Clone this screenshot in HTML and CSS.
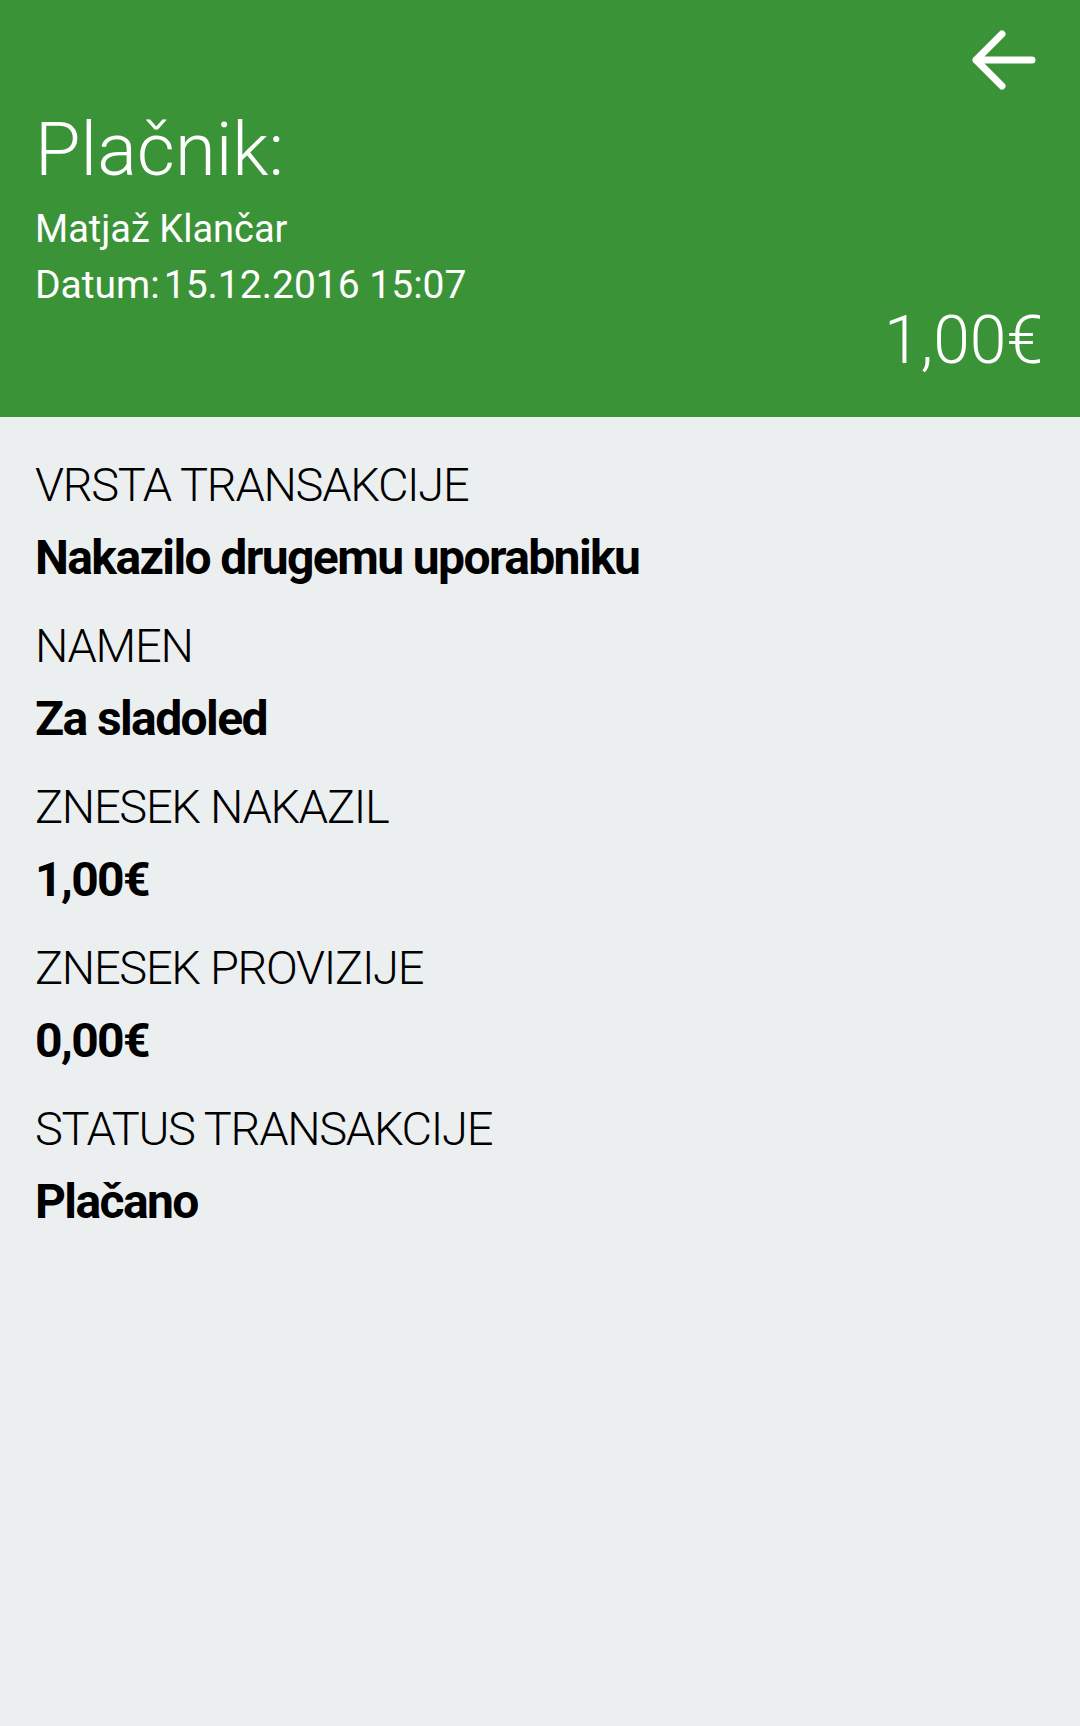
FILE: index.html
```html
<!DOCTYPE html>
<html lang="sl">
<head>
  <meta charset="UTF-8">
  <title>Podrobnosti transakcije</title>
  <link rel="stylesheet" href="styles.css">
</head>
<body>
  <header class="payer-header">
    <div class="top-row">
      <a href="#" class="back-btn" aria-label="Nazaj">
        <svg width="64" height="62" viewBox="0 0 64 62">
          <path d="M60 31H4M30 5L4 31L30 57" fill="none" stroke="#fff" stroke-width="7" stroke-linecap="round" stroke-linejoin="round"/>
        </svg>
      </a>
    </div>
    <h1 class="payer-title">Plačnik:</h1>
    <div class="payer-name">Matjaž Klančar</div>
    <div class="payer-date"><span class="date-label">Datum:</span><span>15.12.2016 15:07</span></div>
    <div class="payer-amount">1,00€</div>
  </header>

  <main class="details">
    <div class="detail">
      <div class="detail-label">VRSTA TRANSAKCIJE</div>
      <div class="detail-value">Nakazilo drugemu uporabniku</div>
    </div>
    <div class="detail">
      <div class="detail-label">NAMEN</div>
      <div class="detail-value">Za sladoled</div>
    </div>
    <div class="detail">
      <div class="detail-label">ZNESEK NAKAZIL</div>
      <div class="detail-value">1,00€</div>
    </div>
    <div class="detail">
      <div class="detail-label">ZNESEK PROVIZIJE</div>
      <div class="detail-value">0,00€</div>
    </div>
    <div class="detail">
      <div class="detail-label">STATUS TRANSAKCIJE</div>
      <div class="detail-value">Plačano</div>
    </div>
  </main>
</body>
</html>
```

FILE: styles.css
```css
body {
  margin: 0;
  font-family: Roboto, "Liberation Sans", sans-serif;
  background-color: #eceff0;
  color: #000;
  min-height: 1726px;
}
.payer-header {
  background-color: #3a9337;
  color: #fff;
  height: 417px;
  box-sizing: border-box;
  padding: 29px 37px 0 35px;
  display: flex;
  flex-direction: column;
}
.top-row {
  display: flex;
  justify-content: flex-end;
}
.back-btn {
  display: block;
  height: 62px;
  margin-right: 7px;
}
.back-btn svg {
  display: block;
}
.payer-title {
  margin: 22px 0 0;
  font-size: 74px;
  font-weight: 300;
  line-height: 1;
}
.payer-name {
  margin-top: 23px;
  font-size: 38px;
  line-height: 1;
}
.payer-date {
  margin-top: 18px;
  font-size: 39px;
  line-height: 1;
}
.date-label {
  margin-right: 4px;
}
.payer-amount {
  align-self: flex-end;
  margin-top: 3px;
  font-size: 66px;
  font-weight: 300;
  line-height: 1;
}
.details {
  padding: 44px 35px 0;
}
.detail {
  margin-bottom: 40px;
}
.detail-label {
  font-size: 47px;
  font-weight: 300;
  letter-spacing: -1.3px;
  line-height: 1;
}
.detail-value {
  margin-top: 26px;
  font-size: 48px;
  font-weight: 700;
  letter-spacing: -1.6px;
  line-height: 1;
}
```
